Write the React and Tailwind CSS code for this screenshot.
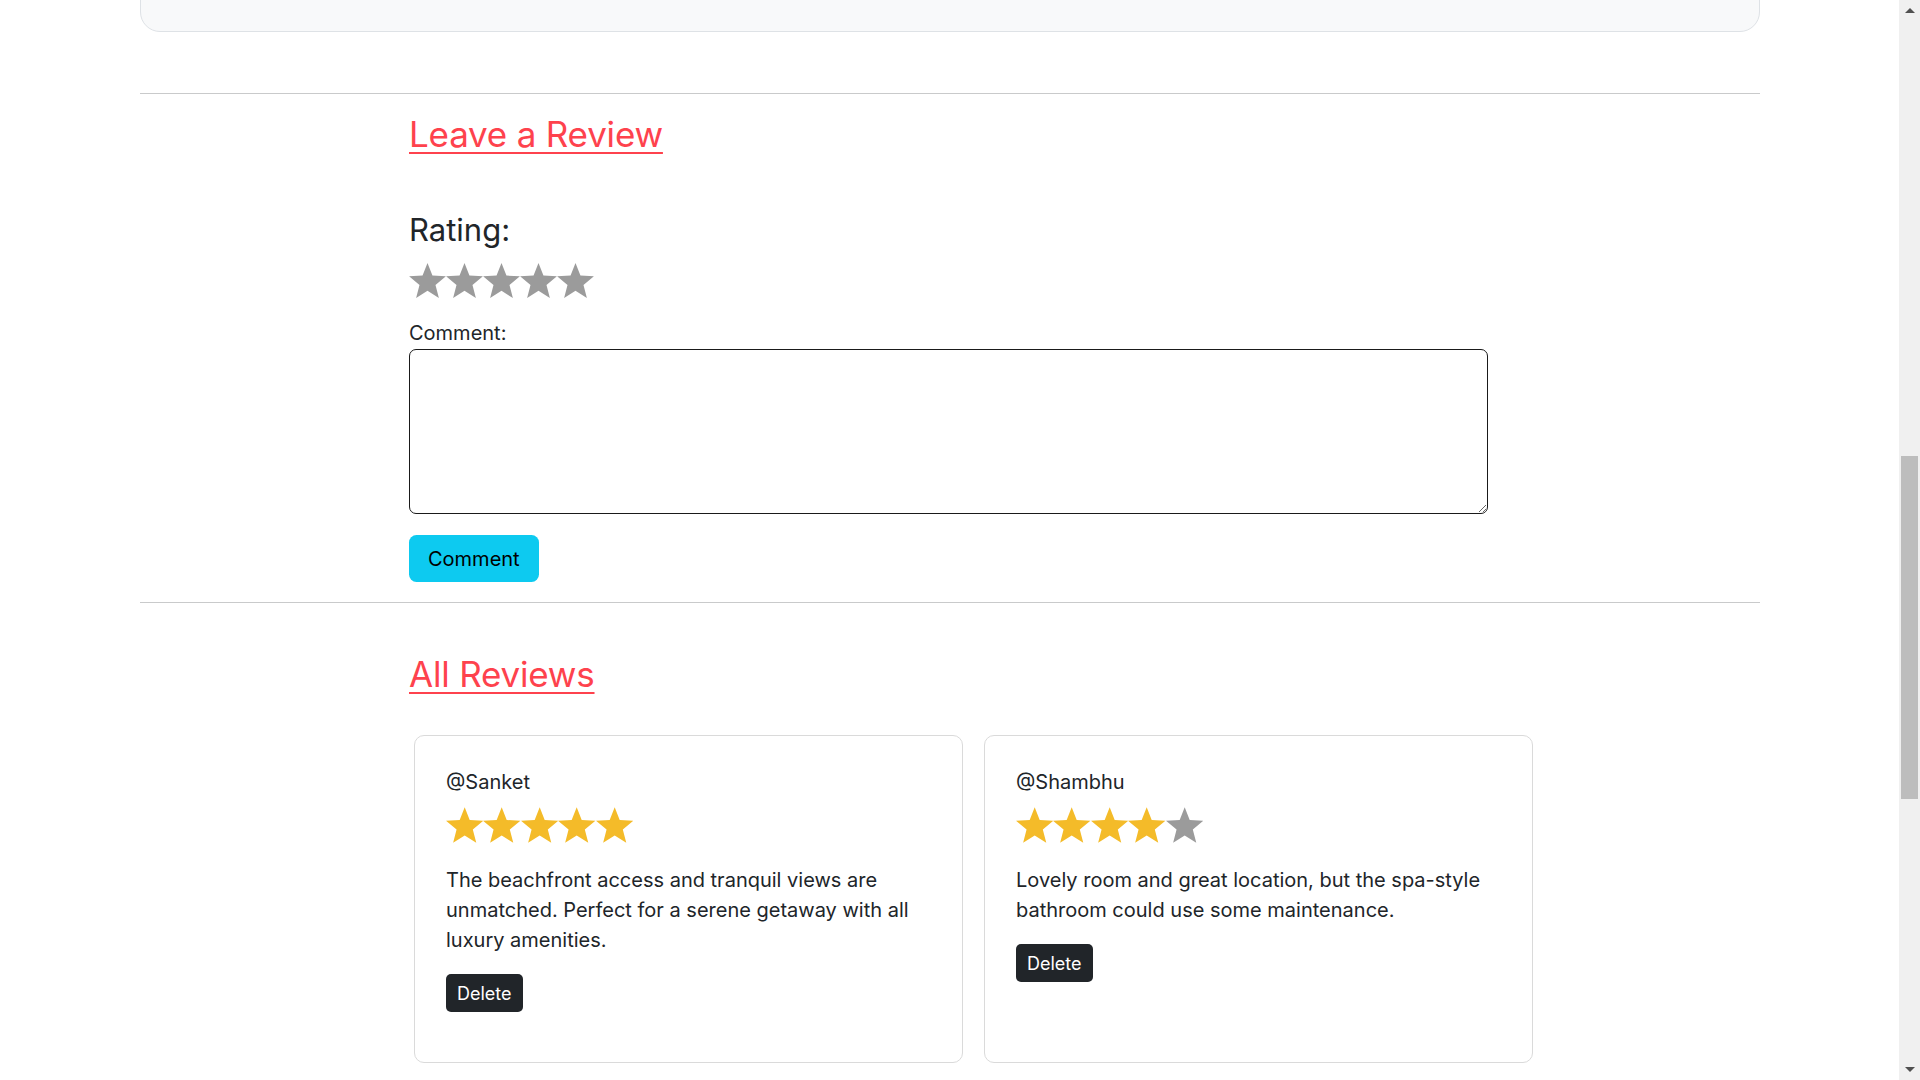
import { useLayoutEffect, useRef } from 'react'

const reviews = [
  {
    author: 'Sanket',
    rating: 5,
    comment:
      'The beachfront access and tranquil views are unmatched. Perfect for a serene getaway with all luxury amenities.',
  },
  {
    author: 'Shambhu',
    rating: 4,
    comment: 'Lovely room and great location, but the spa-style bathroom could use some maintenance.',
  },
]

function Star({ className }) {
  return (
    <svg viewBox="0 0 95.1 90.45" className={className}>
      <polygon points="47.55,0 60.3,32.4 95.1,34.55 68.2,56.7 76.94,90.45 47.55,71.8 18.16,90.45 26.9,56.7 0,34.55 34.8,32.4" />
    </svg>
  )
}

function Stars({ value = 0, size = 'h-[35px] w-[37px]' }) {
  return (
    <div className="flex">
      {[1, 2, 3, 4, 5].map((n) => (
        <Star key={n} className={`${size} ${n <= value ? 'fill-[#f4bb29]' : 'fill-[#9b9b9b]'}`} />
      ))}
    </div>
  )
}

function ReviewCard({ review }) {
  return (
    <div className="w-[549px] rounded-[10px] border border-[#dadada] px-[31px] pt-[31px] pb-[50px]">
      <p className="text-[20px] leading-[30px]">@{review.author}</p>
      <div className="mt-[10px]">
        <Stars value={review.rating} size="h-[36px] w-[37.4px]" />
      </div>
      <p className="mt-[22px] text-[20px] leading-[30px]">{review.comment}</p>
      <button className="mt-[19px] h-[38px] rounded-[5px] bg-[#212529] px-[11px] text-[18px] text-white">
        Delete
      </button>
    </div>
  )
}

// window scrollbar of the browser, as it appears in the screenshot
function ScrollBar() {
  return (
    <div className="fixed top-0 right-0 flex h-screen w-[21px] flex-col bg-[#f0f0f0]">
      <div className="flex h-[21px] items-center justify-center">
        <svg viewBox="0 0 10 5" className="h-[5px] w-[10px] fill-[#505050]">
          <polygon points="5,0 10,5 0,5" />
        </svg>
      </div>
      <div className="flex-1 px-[2px]">
        <div className="mt-[435px] h-[343px] bg-[#bdbdbd]" />
      </div>
      <div className="flex h-[21px] items-center justify-center">
        <svg viewBox="0 0 10 5" className="h-[5px] w-[10px] fill-[#505050]">
          <polygon points="0,0 10,0 5,5" />
        </svg>
      </div>
    </div>
  )
}

export default function App() {
  const pageRef = useRef(null)

  useLayoutEffect(() => {
    if (pageRef.current) pageRef.current.scrollTop = 1370
  }, [])

  return (
    <div
      ref={pageRef}
      className="h-screen overflow-y-scroll bg-white font-['Inter',sans-serif] text-[#212529] [&::-webkit-scrollbar]:w-0"
    >
      <div className="ml-[140px] w-[1620px] pb-[837px]">
        {/* listing details card (scrolled past) */}
        <div className="mt-[40px] h-[1362px] rounded-[20px] border border-[#dee2e6] bg-[#f8f9fa]" />

        <div className="mt-[61px] h-px bg-[#c9cacb]" />

        {/* leave a review */}
        <div className="ml-[269px]">
          <h2 className="mt-[19px] text-[35px] leading-[42px] tracking-[-0.2px] text-[#fe424d] underline decoration-[2px] underline-offset-[5px]">
            Leave a Review
          </h2>
          <p className="mt-[56px] text-[31px] leading-[37px]">Rating:</p>
          <div className="mt-[15px]">
            <Stars value={0} />
          </div>
          <label className="mt-[20px] block text-[20px] leading-[30px]">Comment:</label>
          <textarea className="mt-px block h-[165px] w-[1079px] rounded-[7px] border border-[#1a1a1a] px-3 py-2 text-[20px] outline-none" />
          <button className="mt-[21px] h-[47px] rounded-[7.5px] bg-[#0dcaf0] px-[19px] text-[20px] text-black">
            Comment
          </button>
        </div>

        <div className="mt-[20px] h-px bg-[#c9cacb]" />

        {/* all reviews */}
        <div className="ml-[269px]">
          <h2 className="mt-[50px] text-[35px] leading-[42px] tracking-[-0.2px] text-[#fe424d] underline decoration-[2px] underline-offset-[5px]">
            All Reviews
          </h2>
        </div>
        <div className="mt-[40px] ml-[274px] flex gap-[21px]">
          {reviews.map((r) => (
            <ReviewCard key={r.author} review={r} />
          ))}
        </div>
      </div>
      <ScrollBar />
    </div>
  )
}
